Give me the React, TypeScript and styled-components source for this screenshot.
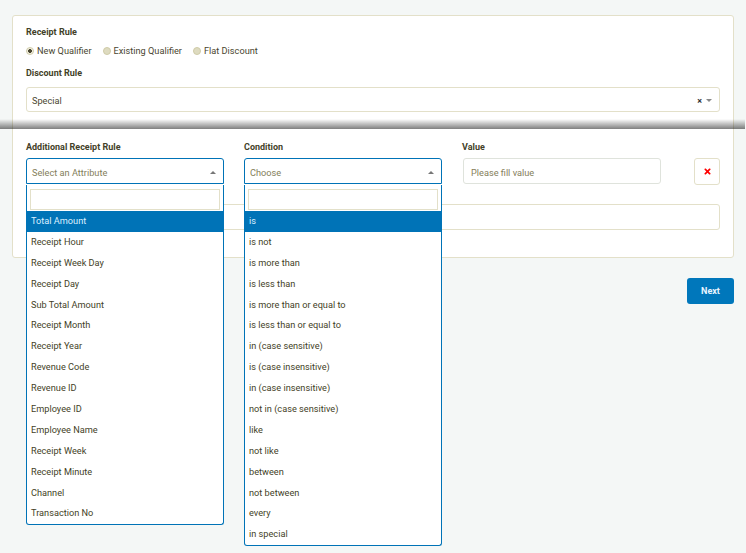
import { useState } from "react";
import styled, { createGlobalStyle } from "styled-components";
import { FaTimes } from "react-icons/fa";

const BLUE = "#0073b7";
const BEIGE = "#e3e0c9";
const TEXT = "#4a4630";
const MUTED = "#847e5a";

const GlobalStyle = createGlobalStyle`
  html, body {
    margin: 0;
    background: #f4f7f6;
    font-family: Roboto, "Liberation Sans", sans-serif;
    color: ${TEXT};
  }
  * { box-sizing: border-box; }
`;

const Page = styled.div`
  position: relative;
  padding: 15px 12px 0 12px;
  height: 553px;
  overflow: hidden;
`;

const ScrollShadow = styled.div`
  position: absolute;
  top: 119px;
  left: 0;
  width: 745px;
  height: 10px;
  background: linear-gradient(to bottom, rgba(0, 0, 0, 0), rgba(0, 0, 0, 0.5));
  pointer-events: none;
  z-index: 5;
`;

const Card = styled.div`
  background: #fff;
  border: 1px solid ${BEIGE};
  border-radius: 3px;
  padding: 10px 13px 27px 13px;
`;

const Label = styled.div<{ $mt?: number }>`
  font-size: 9px;
  line-height: 12px;
  font-weight: 700;
  color: #433f28;
  margin-top: ${({ $mt }) => $mt ?? 0}px;
`;

const RadioGroup = styled.div`
  display: flex;
  gap: 11px;
  margin-top: 7px;
  font-size: 9.2px;
  line-height: 12px;
`;

const RadioItem = styled.label`
  display: flex;
  align-items: center;
  gap: 3px;
`;

const RadioDot = styled.span<{ $checked?: boolean }>`
  width: 8px;
  height: 8px;
  border-radius: 50%;
  border: 1px solid #cfcba8;
  background: ${({ $checked }) =>
    $checked ? "radial-gradient(circle, #4a4630 0 1.6px, #f3f1e3 2.2px)" : "#dedbc0"};
`;

const SelectBox = styled.div<{ $open?: boolean; $mt?: number }>`
  display: flex;
  align-items: center;
  height: ${({ $mt }) => ($mt ? 25 : 26)}px;
  margin-top: ${({ $mt }) => $mt ?? 0}px;
  padding: 2px 5px 0 5px;
  background: #fff;
  border: 1px solid ${({ $open }) => ($open ? BLUE : BEIGE)};
  border-radius: ${({ $open }) => ($open ? "3px 3px 0 0" : "3px")};
  font-size: 9.2px;
`;

const SelectText = styled.span<{ $placeholder?: boolean }>`
  flex: 1;
  color: ${({ $placeholder }) => ($placeholder ? MUTED : TEXT)};
`;

const Clear = styled.span`
  font-size: 9px;
  font-weight: 700;
  color: #333;
  margin-right: 4px;
`;

const Caret = styled.span<{ $up?: boolean }>`
  width: 0;
  height: 0;
  margin-right: 2px;
  border-left: 3px solid transparent;
  border-right: 3px solid transparent;
  ${({ $up }) => ($up ? "border-bottom: 3px solid #777;" : "border-top: 3px solid #888;")}
`;

const RuleGrid = styled.div`
  display: grid;
  grid-template-columns: 198px 198px 198px 1fr;
  column-gap: 20px;
  row-gap: 5px;
  margin-top: 29px;
`;

const Field = styled.div`
  position: relative;
`;

const Dropdown = styled.div`
  position: absolute;
  top: 100%;
  left: 0;
  right: 0;
  background: #fff;
  border: 1px solid ${BLUE};
  border-top: none;
  border-radius: 0 0 3px 3px;
  z-index: 10;
`;

const SearchWrap = styled.div`
  padding: 4px 3px 1px 3px;
`;

const SearchInput = styled.input`
  display: block;
  width: 100%;
  height: 21px;
  border: 1px solid ${BEIGE};
  outline: none;
`;

const Option = styled.div<{ $active?: boolean }>`
  height: 20.9px;
  line-height: 20px;
  padding-left: 4px;
  font-size: 9.2px;
  background: ${({ $active }) => ($active ? BLUE : "transparent")};
  color: ${({ $active }) => ($active ? "#dcefff" : "#443f27")};
`;

const TextInput = styled.input`
  width: 100%;
  height: 26px;
  padding: 2px 7px 0 7px;
  border: 1px solid #dfe3dc;
  border-radius: 3px;
  font-family: inherit;
  font-size: 9.2px;
  color: ${TEXT};
  outline: none;
  &::placeholder {
    color: ${MUTED};
  }
`;

const ValueInput = styled(TextInput)`
  margin-left: 1px;
`;

const WideInput = styled(TextInput)`
  display: block;
  margin-top: 19px;
  border-color: ${BEIGE};
`;

const RemoveButton = styled.button`
  justify-self: end;
  width: 26px;
  height: 27px;
  padding: 0;
  display: flex;
  align-items: center;
  justify-content: center;
  background: #fff;
  border: 1px solid ${BEIGE};
  border-radius: 3px;
  color: #f00;
`;

const Footer = styled.div`
  display: flex;
  justify-content: flex-end;
  margin-top: 20px;
`;

const NextButton = styled.button`
  width: 47px;
  height: 26px;
  border: none;
  border-radius: 3px;
  background: #0077bb;
  color: #e8f4ff;
  font-family: inherit;
  font-size: 9px;
  font-weight: 700;
`;

const attributes = [
  "Total Amount",
  "Receipt Hour",
  "Receipt Week Day",
  "Receipt Day",
  "Sub Total Amount",
  "Receipt Month",
  "Receipt Year",
  "Revenue Code",
  "Revenue ID",
  "Employee ID",
  "Employee Name",
  "Receipt Week",
  "Receipt Minute",
  "Channel",
  "Transaction No",
];

const conditions = [
  "is",
  "is not",
  "is more than",
  "is less than",
  "is more than or equal to",
  "is less than or equal to",
  "in (case sensitive)",
  "is (case insensitive)",
  "in (case insensitive)",
  "not in (case sensitive)",
  "like",
  "not like",
  "between",
  "not between",
  "every",
  "in special",
];

const radios = ["New Qualifier", "Existing Qualifier", "Flat Discount"];

export default function App() {
  const [rule, setRule] = useState("New Qualifier");

  return (
    <Page>
      <GlobalStyle />
      <Card>
        <Label>Receipt Rule</Label>
        <RadioGroup>
          {radios.map((r) => (
            <RadioItem key={r} onClick={() => setRule(r)}>
              <RadioDot $checked={rule === r} />
              {r}
            </RadioItem>
          ))}
        </RadioGroup>

        <Label $mt={10}>Discount Rule</Label>
        <SelectBox $mt={8}>
          <SelectText>Special</SelectText>
          <Clear>×</Clear>
          <Caret />
        </SelectBox>

        <RuleGrid>
          <Label>Additional Receipt Rule</Label>
          <Label>Condition</Label>
          <Label>Value</Label>
          <div />

          <Field>
            <SelectBox $open>
              <SelectText $placeholder>Select an Attribute</SelectText>
              <Caret $up />
            </SelectBox>
            <Dropdown>
              <SearchWrap>
                <SearchInput />
              </SearchWrap>
              {attributes.map((a, i) => (
                <Option key={a} $active={i === 0}>
                  {a}
                </Option>
              ))}
            </Dropdown>
          </Field>

          <Field>
            <SelectBox $open>
              <SelectText $placeholder>Choose</SelectText>
              <Caret $up />
            </SelectBox>
            <Dropdown>
              <SearchWrap>
                <SearchInput />
              </SearchWrap>
              {conditions.map((c, i) => (
                <Option key={c} $active={i === 0}>
                  {c}
                </Option>
              ))}
            </Dropdown>
          </Field>

          <ValueInput placeholder="Please fill value" />
          <RemoveButton>
            <FaTimes size={9} />
          </RemoveButton>
        </RuleGrid>

        <WideInput />
      </Card>

      <Footer>
        <NextButton>Next</NextButton>
      </Footer>
      <ScrollShadow />
    </Page>
  );
}
